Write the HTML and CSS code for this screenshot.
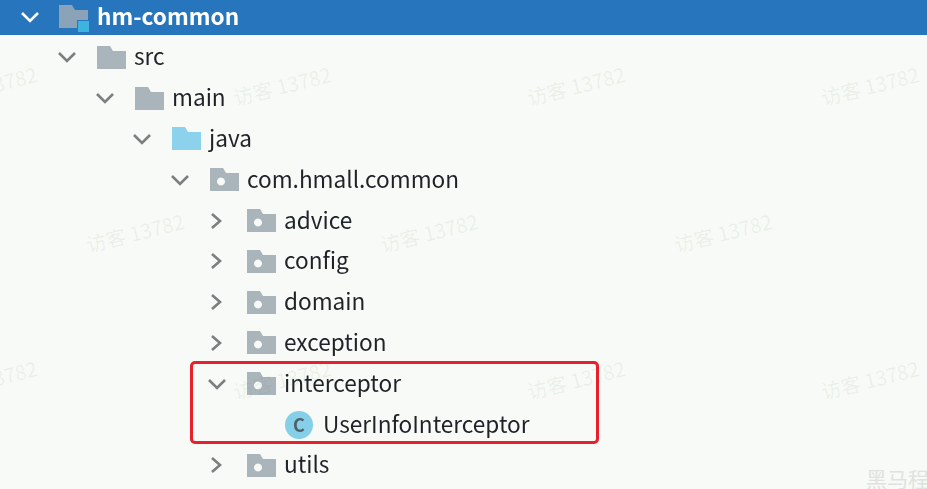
FILE: index.html

```html
<!DOCTYPE html>
<html lang="zh">
<head>
  <meta charset="UTF-8" />
  <meta name="viewport" content="width=device-width, initial-scale=1.0"/>
  <title>hm-common</title>
  <link rel="stylesheet" href="styles.css">
</head>
<body>
  <svg class="defs" width="0" height="0">
    <symbol id="folder" viewBox="0 0 29 23">
      <path d="M0 0H13L16 5H29V23H0Z"/>
    </symbol>
    <symbol id="package" viewBox="0 0 29 23">
      <path fill-rule="evenodd" d="M0 0H13L16 5H29V23H0ZM11 9.500a4 4 0 1 0 .01 0Z"/>
    </symbol>
    <symbol id="down" viewBox="0 0 20 12">
      <path d="M2 2L10 10L18 2" fill="none" stroke="currentColor" stroke-width="2.6"/>
    </symbol>
    <symbol id="right" viewBox="0 0 12 18">
      <path d="M2 2L10 9L2 16" fill="none" stroke="currentColor" stroke-width="2.6"/>
    </symbol>
  </svg>

  <div class="tree">
    <div class="row module">
      <svg class="chev-down"><use href="#down"/></svg>
      <span class="module-icon">
        <svg class="icon"><use href="#folder"/></svg>
        <span class="module-badge"></span>
      </span>
      <span class="label">hm-common</span>
    </div>
    <div class="rows">
      <div class="row d1"><svg class="chev-down"><use href="#down"/></svg><svg class="icon"><use href="#folder"/></svg><span class="label">src</span></div>
      <div class="row d2"><svg class="chev-down"><use href="#down"/></svg><svg class="icon"><use href="#folder"/></svg><span class="label">main</span></div>
      <div class="row d3"><svg class="chev-down"><use href="#down"/></svg><svg class="icon source"><use href="#folder"/></svg><span class="label">java</span></div>
      <div class="row d4"><svg class="chev-down"><use href="#down"/></svg><svg class="icon"><use href="#package"/></svg><span class="label">com.hmall.common</span></div>
      <div class="row d5"><svg class="chev-right"><use href="#right"/></svg><svg class="icon"><use href="#package"/></svg><span class="label">advice</span></div>
      <div class="row d5"><svg class="chev-right"><use href="#right"/></svg><svg class="icon"><use href="#package"/></svg><span class="label">config</span></div>
      <div class="row d5"><svg class="chev-right"><use href="#right"/></svg><svg class="icon"><use href="#package"/></svg><span class="label">domain</span></div>
      <div class="row d5"><svg class="chev-right"><use href="#right"/></svg><svg class="icon"><use href="#package"/></svg><span class="label">exception</span></div>
      <div class="row d5"><svg class="chev-down"><use href="#down"/></svg><svg class="icon"><use href="#package"/></svg><span class="label">interceptor</span></div>
      <div class="row d6"><span class="class-icon">C</span><span class="label">UserInfoInterceptor</span></div>
      <div class="row d5"><svg class="chev-right"><use href="#right"/></svg><svg class="icon"><use href="#package"/></svg><span class="label">utils</span></div>
    </div>
  </div>

  <div class="watermarks">
    <div class="wm-row wm-odd"><span>访客 13782</span><span>访客 13782</span><span>访客 13782</span><span>访客 13782</span></div>
    <div class="wm-row wm-even"><span>访客 13782</span><span>访客 13782</span><span>访客 13782</span></div>
    <div class="wm-row wm-odd"><span>访客 13782</span><span>访客 13782</span><span>访客 13782</span><span>访客 13782</span></div>
  </div>

  <div class="highlight"></div>
  <div class="corner-mark">黑马程序员</div>
</body>
</html>
```

FILE: styles.css

```css
html, body {
  margin: 0;
  height: 100%;
}
body {
  position: relative;
  overflow: hidden;
  width: 927px;
  height: 489px;
  background: #f7faf6;
  color: #1f2328;
  font-family: "Noto Sans CJK SC", "Noto Sans", sans-serif;
  font-size: 22.6px;
}
.defs {
  position: absolute;
}
.tree {
  filter: blur(0.4px);
}
.row {
  display: flex;
  align-items: center;
  height: 40.8px;
  white-space: nowrap;
}
.label {
  margin-bottom: 3px;
}
.module {
  height: 33px;
  padding: 0 0 2px 20px;
  background: #2675bd;
  color: #fff;
  font-weight: 700;
}
.module .chev-down {
  color: #fff;
  margin-right: 19px;
}
.rows {
  padding-top: 2px;
}
.d1 { padding-left: 57px; }
.d2 { padding-left: 95px; }
.d3 { padding-left: 132px; }
.d4 { padding-left: 170px; }
.d5 { padding-left: 207px; }
.d6 { padding-left: 285px; }

.chev-down {
  width: 20px;
  height: 12px;
  margin-right: 20px;
  color: #7c7f80;
}
.chev-right {
  width: 12px;
  height: 18px;
  margin-left: 3px;
  margin-right: 25px;
  color: #7c7f80;
}
.icon {
  flex: none;
  width: 29px;
  height: 23px;
  margin-right: 8px;
  fill: #aab4bb;
}
.icon.source {
  fill: #8cd2ec;
}
.module-icon {
  position: relative;
  display: flex;
  margin-right: 9px;
}
.module-icon .icon {
  margin-right: 0;
  fill: #8ba3b8;
}
.module-badge {
  position: absolute;
  left: 18px;
  top: 15px;
  width: 11px;
  height: 11px;
  background: #3fb3e0;
  border: 1px solid #2675bd;
}
.class-icon {
  flex: none;
  width: 28px;
  height: 28px;
  margin-right: 10px;
  border-radius: 50%;
  background: #86cfe8;
  color: #4f6068;
  font-size: 18px;
  font-weight: 700;
  line-height: 26px;
  text-align: center;
}

.watermarks {
  position: absolute;
  left: -159px;
  top: 12px;
  pointer-events: none;
}
.wm-row {
  display: flex;
  height: 147px;
  align-items: center;
}
.wm-even {
  margin-left: 147px;
}
.wm-row span {
  width: 294px;
  text-align: center;
  font-size: 20px;
  color: rgba(110, 125, 115, 0.09);
  transform: rotate(-14deg);
}

.highlight {
  position: absolute;
  left: 190px;
  top: 361px;
  width: 403px;
  height: 77px;
  border: 3px solid #e6212b;
  border-radius: 5px;
}
.corner-mark {
  position: absolute;
  left: 866px;
  top: 463px;
  width: 120px;
  font-size: 21px;
  white-space: nowrap;
  color: #e0e2df;
}
```
